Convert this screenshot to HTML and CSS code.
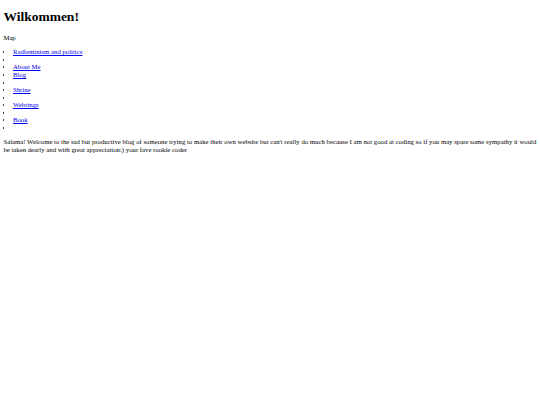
FILE: index.html
```html
<!DOCTYPE html>
<html>
<head>
<meta charset="utf-8">
<title>Wilkommen!</title>
<link rel="stylesheet" href="styles.css">
</head>
<body class="page">
<h1 class="title">Wilkommen!</h1>
<p class="text">Map</p>
<ul class="map">
<li><a class="link" href="#">Radfeminism and politics</a></li>
<li></li>
<li><a class="link" href="#">About Me</a></li>
<li><a class="link" href="#">Blog</a></li>
<li></li>
<li><a class="link" href="#">Shrine</a></li>
<li></li>
<li><a class="link" href="#">Webrings</a></li>
<li></li>
<li><a class="link" href="#">Book</a></li>
<li></li>
</ul>
<p class="text">Salama! Welcome to the sad but productive blog of someone trying to make their own website but can't really do much because I am not good at coding so if you may spare some sympathy it would be taken dearly and with great appreciation:) your fave rookie coder</p>
</body>
</html>
```
FILE: styles.css
```css
html {
  background: #ffffff;
}
.page {
  margin: 3.375px;
  font-family: "Liberation Serif", "Times New Roman", serif;
  font-size: 6.75px;
  line-height: 7.7px;
  color: #000000;
}
.title {
  font-size: 13.5px;
  line-height: 15.5px;
  font-weight: bold;
  margin: 6px 0 9.045px;
}
.text {
  margin: 6.75px 0;
}
.map {
  margin: 6.75px 0 6px;
  padding-left: 9.6px;
  line-height: 7.55px;
}
.link {
  color: #0000ee;
  text-decoration: underline;
}
```
